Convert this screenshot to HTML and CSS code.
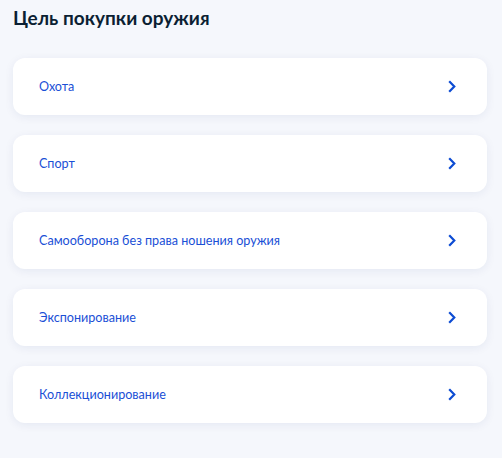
FILE: index.html
```html
<!DOCTYPE html>
<html lang="ru">
<head>
<meta charset="utf-8">
<link rel="stylesheet" href="styles.css">
</head>
<body>
<div class="page">
  <h1 class="title">Цель покупки оружия</h1>
  <ul class="list">
    <li class="card"><span class="label">Охота</span><svg class="chev" width="8" height="13" viewBox="0 0 8 13"><path d="M1.2 1.2 L6.3 6.5 L1.2 11.8" fill="none" stroke="#0d4cd3" stroke-width="2.2"/></svg></li>
    <li class="card"><span class="label">Спорт</span><svg class="chev" width="8" height="13" viewBox="0 0 8 13"><path d="M1.2 1.2 L6.3 6.5 L1.2 11.8" fill="none" stroke="#0d4cd3" stroke-width="2.2"/></svg></li>
    <li class="card"><span class="label">Самооборона без права ношения оружия</span><svg class="chev" width="8" height="13" viewBox="0 0 8 13"><path d="M1.2 1.2 L6.3 6.5 L1.2 11.8" fill="none" stroke="#0d4cd3" stroke-width="2.2"/></svg></li>
    <li class="card"><span class="label">Экспонирование</span><svg class="chev" width="8" height="13" viewBox="0 0 8 13"><path d="M1.2 1.2 L6.3 6.5 L1.2 11.8" fill="none" stroke="#0d4cd3" stroke-width="2.2"/></svg></li>
    <li class="card"><span class="label">Коллекционирование</span><svg class="chev" width="8" height="13" viewBox="0 0 8 13"><path d="M1.2 1.2 L6.3 6.5 L1.2 11.8" fill="none" stroke="#0d4cd3" stroke-width="2.2"/></svg></li>
  </ul>
</div>
</body>
</html>
```

FILE: styles.css
```css
html, body {
  margin: 0;
  padding: 0;
  background: #f5f7fc;
}
body {
  font-family: Lato, "Noto Sans", sans-serif;
  color: #0b1f33;
}
.page {
  padding: 6px 15px 20px 13px;
}
.title {
  margin: 0 0 28px 0;
  font-size: 19px;
  line-height: 24px;
  font-weight: 700;
  color: #0b1f33;
}
.list {
  list-style: none;
  margin: 0;
  padding: 0;
  display: flex;
  flex-direction: column;
  gap: 20px;
}
.card {
  height: 57px;
  box-sizing: border-box;
  background: #ffffff;
  border-radius: 12px;
  box-shadow: 0 2px 10px rgba(0, 40, 120, 0.07);
  display: flex;
  align-items: center;
  justify-content: space-between;
  padding: 0 31px 0 26px;
}
.label {
  font-size: 12.6px;
  line-height: 18px;
  color: #1a4fd6;
}
.chev {
  display: block;
}
```
